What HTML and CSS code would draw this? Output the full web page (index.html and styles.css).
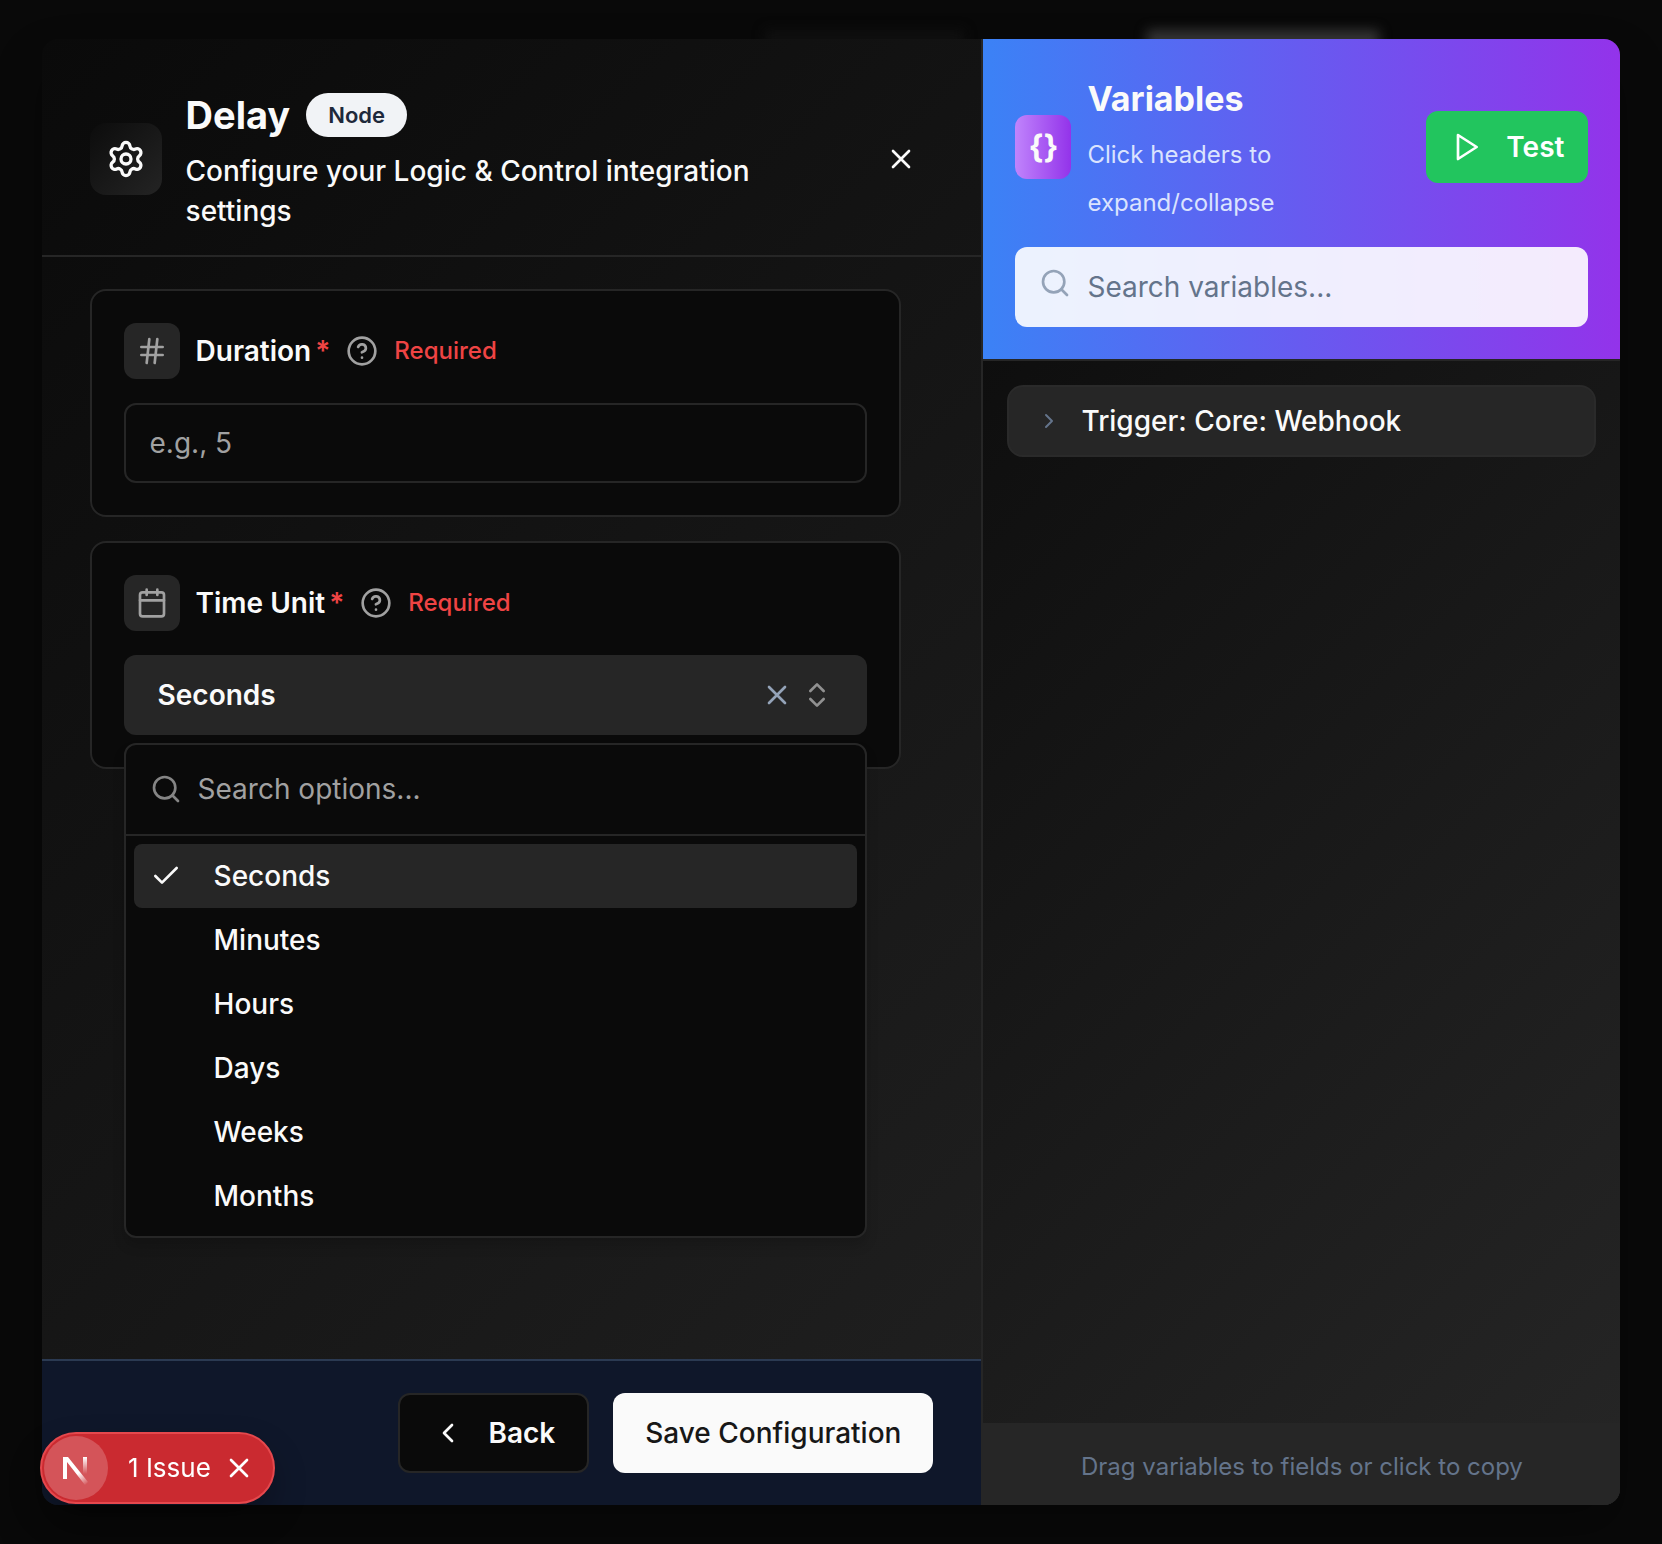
FILE: index.html
```html
<!DOCTYPE html>
<html lang="en">
<head>
<meta charset="utf-8">
<meta name="viewport" content="width=device-width, initial-scale=1">
<title>Delay – Node configuration</title>
<link rel="stylesheet" href="styles.css">
</head>
<body>
<div class="glow glow-soft"></div>
<div class="glow glow-bright"></div>

<main class="dialog">
  <section class="config">
    <header class="config-header">
      <span class="node-icon">
        <svg class="icon icon-lg" viewBox="0 0 24 24"><path d="M9.671 4.136a2.34 2.34 0 0 1 4.659 0 2.34 2.34 0 0 0 3.319 1.915 2.34 2.34 0 0 1 2.33 4.033 2.34 2.34 0 0 0 0 3.831 2.34 2.34 0 0 1-2.33 4.033 2.34 2.34 0 0 0-3.319 1.915 2.34 2.34 0 0 1-4.659 0 2.34 2.34 0 0 0-3.32-1.915 2.34 2.34 0 0 1-2.33-4.033 2.34 2.34 0 0 0 0-3.831A2.34 2.34 0 0 1 6.35 6.051a2.34 2.34 0 0 0 3.319-1.915"/><circle cx="12" cy="12" r="3"/></svg>
      </span>
      <div class="config-heading">
        <div class="title-row">
          <h1 class="title">Delay</h1>
          <span class="badge">Node</span>
        </div>
        <p class="subtitle">Configure your Logic &amp; Control integration settings</p>
      </div>
      <button class="icon-button close" type="button" aria-label="Close">
        <svg class="icon" viewBox="0 0 24 24"><path d="M18 6 6 18M6 6l12 12"/></svg>
      </button>
    </header>

    <form class="fields">
      <div class="card">
        <div class="field-header">
          <span class="field-icon">
            <svg class="icon" viewBox="0 0 24 24"><path d="M4 9h16M4 15h16M10 3 8 21M16 3l-2 18"/></svg>
          </span>
          <div class="field-label">
            <label for="duration">Duration</label><span class="star">*</span>
          </div>
          <svg class="icon help" viewBox="0 0 24 24"><circle cx="12" cy="12" r="10"/><path d="M9.09 9a3 3 0 0 1 5.83 1c0 2-3 3-3 3M12 17h.01"/></svg>
          <span class="required">Required</span>
        </div>
        <input class="text-input" id="duration" type="text" placeholder="e.g., 5">
      </div>

      <div class="card">
        <div class="field-header">
          <span class="field-icon">
            <svg class="icon" viewBox="0 0 24 24"><path d="M8 2v4M16 2v4M3 10h18"/><rect x="3" y="4" width="18" height="18" rx="2"/></svg>
          </span>
          <div class="field-label">
            <label for="unit">Time Unit</label><span class="star">*</span>
          </div>
          <svg class="icon help" viewBox="0 0 24 24"><circle cx="12" cy="12" r="10"/><path d="M9.09 9a3 3 0 0 1 5.83 1c0 2-3 3-3 3M12 17h.01"/></svg>
          <span class="required">Required</span>
        </div>
        <div class="combo">
          <div class="combo-box">
            <select class="combo-select" id="unit">
              <option>Seconds</option>
              <option>Minutes</option>
              <option>Hours</option>
              <option>Days</option>
              <option>Weeks</option>
              <option>Months</option>
            </select>
            <button class="combo-clear" type="button" aria-label="Clear">
              <svg class="icon" viewBox="0 0 24 24"><path d="M18 6 6 18M6 6l12 12"/></svg>
            </button>
            <svg class="icon combo-arrows" viewBox="0 0 24 24"><path d="m7 15 5 5 5-5M7 9l5-5 5 5"/></svg>
          </div>
          <div class="popover">
            <div class="popover-search">
              <svg class="icon" viewBox="0 0 24 24"><circle cx="11" cy="11" r="8"/><path d="m21 21-4.300-4.300"/></svg>
              <input class="popover-input" type="text" placeholder="Search options..." aria-label="Search options">
            </div>
            <ul class="options" role="listbox">
              <li class="option selected" role="option" aria-selected="true">
                <svg class="icon" viewBox="0 0 24 24"><path d="M20 6 9 17l-5-5"/></svg>Seconds
              </li>
              <li class="option" role="option">Minutes</li>
              <li class="option" role="option">Hours</li>
              <li class="option" role="option">Days</li>
              <li class="option" role="option">Weeks</li>
              <li class="option" role="option">Months</li>
            </ul>
          </div>
        </div>
      </div>
    </form>

    <footer class="config-footer">
      <button class="button button-dark" type="button">
        <svg class="icon" viewBox="0 0 24 24"><path d="m15 18-6-6 6-6"/></svg>Back
      </button>
      <button class="button button-light" type="button">Save Configuration</button>
    </footer>
  </section>

  <aside class="variables">
    <header class="variables-header">
      <div class="variables-top">
        <span class="braces">{}</span>
        <div class="variables-heading">
          <h2 class="variables-title">Variables</h2>
          <p class="variables-hint">Click headers to expand/collapse</p>
        </div>
        <button class="test" type="button">
          <svg class="icon" viewBox="0 0 24 24"><path d="M6 3l14 9-14 9z"/></svg>Test
        </button>
      </div>
      <div class="search">
        <svg class="icon" viewBox="0 0 24 24"><circle cx="11" cy="11" r="8"/><path d="m21 21-4.300-4.300"/></svg>
        <input class="search-input" type="text" placeholder="Search variables..." aria-label="Search variables">
      </div>
    </header>
    <div class="variables-body">
      <button class="group" type="button">
        <svg class="icon icon-sm" viewBox="0 0 24 24"><path d="m9 18 6-6-6-6"/></svg>Trigger: Core: Webhook
      </button>
    </div>
    <footer class="variables-footer">Drag variables to fields or click to copy</footer>
  </aside>
</main>

<div class="issue">
  <span class="issue-logo">
    <svg viewBox="0 0 64 64" width="64" height="64">
      <defs>
        <linearGradient id="diag" x1="36" y1="36" x2="44" y2="48" gradientUnits="userSpaceOnUse"><stop stop-color="#fff"/><stop offset="1" stop-color="#fff" stop-opacity="0"/></linearGradient>
        <linearGradient id="stem" x1="40" y1="21" x2="40" y2="38" gradientUnits="userSpaceOnUse"><stop stop-color="#fff"/><stop offset="1" stop-color="#fff" stop-opacity="0"/></linearGradient>
      </defs>
      <path d="M19 21h5l20 25-3 3-18-23v17h-4z" fill="url(#diag)"/>
      <path d="M39 21h4v17h-4z" fill="url(#stem)"/>
    </svg>
  </span>
  <span class="issue-text">1 Issue</span>
  <button class="issue-close" type="button" aria-label="Dismiss">
    <svg class="icon" viewBox="0 0 24 24"><path d="M18 6 6 18M6 6l12 12"/></svg>
  </button>
</div>
</body>
</html>
```
FILE: styles.css
```css
* { box-sizing: border-box; }

body {
  margin: 0;
  min-height: 100vh;
  display: flex;
  align-items: center;
  justify-content: center;
  background: #090909;
  color: #fafafa;
  font-family: Inter, "Liberation Sans", sans-serif;
  font-size: 28px;
  line-height: 40px;
}

h1, h2, p, ul { margin: 0; padding: 0; }
ul { list-style: none; }

button, input, select {
  font: inherit;
  color: inherit;
  border: 0;
  background: none;
  padding: 0;
  margin: 0;
}

.icon {
  width: 32px;
  height: 32px;
  flex: none;
  fill: none;
  stroke: currentColor;
  stroke-width: 2;
  stroke-linecap: round;
  stroke-linejoin: round;
}
.icon-lg { width: 40px; height: 40px; }
.icon-sm { width: 24px; height: 24px; }

/* Blurred page content showing behind the dialog */
.glow {
  position: absolute;
  top: 30px;
  height: 40px;
  filter: blur(6px);
}
.glow-soft { left: 46%; width: 12%; background: #101010; }
.glow-bright { left: 69%; width: 14%; background: #363636; }

.dialog {
  position: relative;
  display: flex;
  width: 95vw;
  min-height: 95vh;
  border-radius: 16px;
  overflow: hidden;
  background: linear-gradient(135deg, #0a0a0a, #262626);
  box-shadow: 0 24px 48px rgba(0, 0, 0, .3);
}

.config {
  flex: 1;
  min-width: 0;
  display: flex;
  flex-direction: column;
}

.config-header {
  display: flex;
  align-items: center;
  gap: 24px;
  padding: 48px 48px 24px;
  border-bottom: 2px solid #262626;
}
.node-icon {
  flex: none;
  display: grid;
  place-items: center;
  width: 72px;
  height: 72px;
  border-radius: 16px;
  background: linear-gradient(135deg, #0c0c0c, #242424);
}
.config-heading {
  flex: 1;
  display: flex;
  flex-direction: column;
  gap: 8px;
}
.title-row { display: flex; align-items: center; gap: 16px; }
.title { font-size: 38px; line-height: 56px; font-weight: 700; }
.badge {
  padding: 0 22px;
  border-radius: 22px;
  background: #f1f3f6;
  color: #1e293b;
  font-size: 22px;
  line-height: 44px;
  font-weight: 600;
}
.subtitle { max-width: 600px; font-weight: 500; }
.icon-button {
  display: grid;
  place-items: center;
  width: 64px;
  height: 64px;
}

.fields {
  flex: 1;
  display: flex;
  flex-direction: column;
  gap: 24px;
  padding: 32px 80px 32px 48px;
}
.card {
  display: flex;
  flex-direction: column;
  gap: 24px;
  padding: 32px;
  border: 2px solid #262626;
  border-radius: 16px;
  background: #0a0a0a;
}
.field-header { display: flex; align-items: center; gap: 16px; }
.field-icon {
  display: grid;
  place-items: center;
  width: 56px;
  height: 56px;
  border-radius: 12px;
  background: #262626;
  color: #a1a1a1;
}
.field-label { display: flex; gap: 4px; font-weight: 600; }
.star { color: #ef4444; }
.help { color: #a1a1a1; }
.required { color: #ef4444; font-size: 24px; font-weight: 500; }

.text-input {
  width: 100%;
  height: 80px;
  padding: 0 24px;
  border: 2px solid #262626;
  border-radius: 12px;
}
.text-input::placeholder,
.popover-input::placeholder { color: #a1a1a1; opacity: 1; }

.combo { position: relative; }
.combo-box {
  display: flex;
  align-items: center;
  gap: 8px;
  height: 80px;
  padding: 0 34px;
  border-radius: 12px;
  background: #262626;
}
.combo-select { flex: 1; height: 80px; appearance: none; font-weight: 600; }
.combo-clear { display: grid; color: #94a3b8; }
.combo-arrows { color: #919191; }

.popover {
  position: absolute;
  top: calc(100% + 8px);
  left: 0;
  width: 100%;
  border: 2px solid #262626;
  border-radius: 12px;
  background: #0a0a0a;
  box-shadow: 0 8px 12px rgba(0, 0, 0, .15);
}
.popover-search {
  display: flex;
  align-items: center;
  gap: 16px;
  height: 91px;
  padding: 0 24px;
  border-bottom: 2px solid #262626;
  color: #858585;
}
.popover-input { flex: 1; height: 80px; }
.options { padding: 8px; }
.option {
  display: flex;
  align-items: center;
  gap: 32px;
  height: 64px;
  padding: 0 16px 0 80px;
  border-radius: 8px;
  font-weight: 500;
}
.option.selected { padding-left: 16px; background: #262626; }

.config-footer {
  display: flex;
  justify-content: flex-end;
  gap: 24px;
  padding: 32px 48px;
  border-top: 2px solid #2b3a52;
  background: #0f172a;
}
.button {
  display: flex;
  align-items: center;
  gap: 24px;
  height: 80px;
  padding: 0 32px;
  border-radius: 12px;
}
.button-dark { border: 2px solid #262626; background: #0a0a0a; font-weight: 600; }
.button-light { background: #fafafa; color: #171717; font-weight: 500; }

.variables {
  flex: none;
  width: 639px;
  display: flex;
  flex-direction: column;
  border-left: 2px solid #262626;
  background: linear-gradient(135deg, #0a0a0a, #262626);
}
.variables-header {
  display: flex;
  flex-direction: column;
  gap: 24px;
  padding: 32px;
  border-bottom: 2px solid #262626;
  background: linear-gradient(90deg, #3b82f6, #9333ea);
}
.variables-top { display: flex; align-items: center; gap: 16px; }
.braces {
  flex: none;
  width: 56px;
  border-radius: 12px;
  background: linear-gradient(90deg, #c084fc, #9333ea);
  font-size: 32px;
  font-weight: 700;
  line-height: 64px;
  text-align: center;
}
.variables-heading { flex: 1; margin-bottom: -4px; }
.variables-title {
  margin-bottom: 4px;
  font-size: 34px;
  line-height: 56px;
  font-weight: 700;
}
.variables-hint { max-width: 240px; font-size: 24px; line-height: 48px; color: #dbe3fe; }
.test {
  display: flex;
  align-items: center;
  gap: 24px;
  height: 72px;
  padding: 0 24px;
  border-radius: 12px;
  background: #22c55e;
  color: #fff;
  font-weight: 600;
}
.search {
  display: flex;
  align-items: center;
  gap: 16px;
  height: 80px;
  padding: 0 24px;
  border-radius: 12px;
  background: rgba(255, 255, 255, .9);
  color: #94a3b8;
}
.search .icon { margin-bottom: 8px; }
.search-input { flex: 1; height: 80px; }
.search-input::placeholder { color: #64748b; opacity: 1; }

.variables-body { flex: 1; padding: 24px; }
.group {
  display: flex;
  align-items: center;
  gap: 20px;
  width: 100%;
  height: 72px;
  padding: 0 28px;
  border: 2px solid #2a2a2a;
  border-radius: 16px;
  background: #262626;
  font-weight: 500;
}
.group .icon { color: #64748b; }

.variables-footer {
  padding: 24px 24px 18px;
  background: #262626;
  color: #64748b;
  font-size: 24px;
  text-align: center;
}

/* Developer overlay pinned to the window corner */
.issue {
  position: fixed;
  left: 40px;
  bottom: 40px;
  display: flex;
  align-items: center;
  height: 72px;
  padding: 0 18px 0 2px;
  border: 2px solid #e5484d;
  border-radius: 36px;
  background: #ca2a30;
  color: #fff;
  font-size: 26px;
  box-shadow: 0 16px 32px rgba(0, 0, 0, .25);
}
.issue-logo {
  display: grid;
  width: 64px;
  height: 64px;
  margin-right: 20px;
  border-radius: 50%;
  background: rgba(255, 255, 255, .2);
}
.issue-text { margin-right: 12px; }
.issue-close { display: grid; }
```
